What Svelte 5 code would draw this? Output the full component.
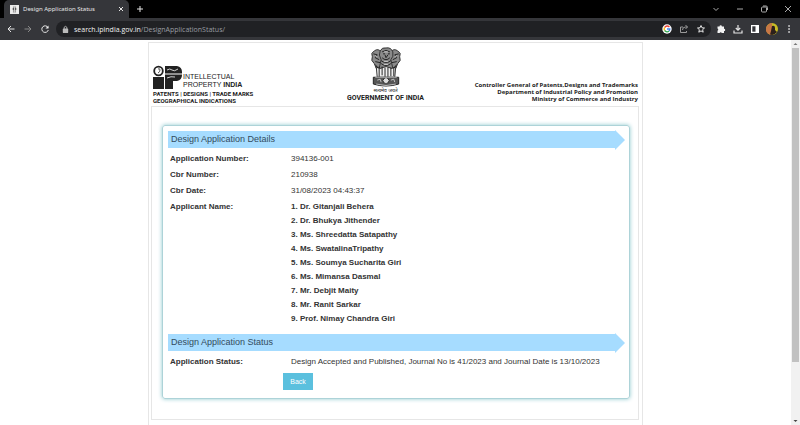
<script>
  const details = [
    ['Application Number:', '394136-001'],
    ['Cbr Number:', '210938'],
    ['Cbr Date:', '31/08/2023 04:43:37']
  ];
  const applicants = [
    'Dr. Gitanjali Behera',
    'Dr. Bhukya Jithender',
    'Ms. Shreedatta Satapathy',
    'Ms. SwatalinaTripathy',
    'Ms. Soumya Sucharita Giri',
    'Ms. Mimansa Dasmal',
    'Mr. Debjit Maity',
    'Mr. Ranit Sarkar',
    'Prof. Nimay Chandra Giri'
  ];
</script>

{#snippet emblem()}
  <svg viewBox="0 0 32 41" aria-hidden="true">
    <g fill="#8a8a8a" stroke="#333" stroke-width="1">
      <path d="M11 5q-3-4-7-1Q0 6 2 10q-2 4 2 7l2 5 7 1z" />
      <path d="M21 5q3-4 7-1 4 2 2 6 2 4-2 7l-2 5-7 1z" />
      <path d="M10 4q2-4 6-3 5-1 7 4 1 5-2 8l2 9H9l2-9Q8 8 10 4z" />
      <path d="M6 20l1 11h18l1-11-4 2-6-2-6 2z" fill="#eee" />
    </g>
    <path d="M12 5q4-3 8 0M13 7h2m3 0h2M15 8l1 3 2-3M12 11q4 4 8 0M11 14q5 4 10 0M11 17q5 4 10 0M3 7l4 1-2 3 4 2M29 7l-4 1 2 3-4 2M5 15l5 1M27 15l-5 1M9 20v11m3-11v9m3-8v10m3-10v10m3-10v9m3-9v9M5 18l3 4m19-4-3 4" fill="none" stroke="#222" stroke-width="1" />
    <path d="M5 9l2 1m18 0 2-1M14 5h4M14 15h4M14 18h4" stroke="#ddd" stroke-width=".8" />
    <path d="M3 31h26v7q-13 4-26 0z" fill="#555" stroke="#222" />
    <circle cx="16" cy="34.500" r="3" fill="#ddd" stroke="#222" />
    <path d="M13 34.500h6m-3-3v6M7 34l3-1 1 3m10-2 3-1 1 3M5 31h22M6 38q10 3 20 0" fill="none" stroke="#ddd" stroke-width=".8" />
  </svg>
{/snippet}

<div class="browser">
  <div class="tabs">
    <div class="tab">
      <svg class="fav" viewBox="0 0 9 9" aria-hidden="true"><path fill="#eee" d="M0 0h9v9H0z" /><path fill="#555" d="M3 1h3v2h1v2H6v3H3V5H2V3h1z" /><path stroke="#ccc" d="M4.500 1v7" /></svg>
      <span>Design Application Status</span>
      <button aria-label="Close tab"><svg viewBox="0 0 10 10"><path d="M3 3l4 4m0-4L3 7" /></svg></button>
    </div>
    <button class="plus" aria-label="New tab"><svg viewBox="0 0 10 10"><path d="M5 2v6M2 5h6" /></svg></button>
    <div class="win">
      <button aria-label="Search tabs"><svg viewBox="0 0 10 10"><path d="M2.500 4L5 6.500 7.500 4" /></svg></button>
      <button aria-label="Minimize"><svg viewBox="0 0 10 10"><path d="M2 5h6" /></svg></button>
      <button aria-label="Restore"><svg viewBox="0 0 10 10"><path d="M2.500 4q0-1 1-1h3q1 0 1 1v3q0 1-1 1h-3q-1 0-1-1zM4 2h3q1.500 0 1.500 1.500V6" /></svg></button>
      <button aria-label="Close window"><svg viewBox="0 0 10 10"><path d="M2 2l6 6m0-6L2 8" /></svg></button>
    </div>
  </div>
  <div class="toolbar">
    <div class="nav">
      <button aria-label="Back a page"><svg viewBox="0 0 10 10"><path d="M8.500 5H2m3-3L2 5l3 3" /></svg></button>
      <button class="off" aria-label="Forward a page"><svg viewBox="0 0 10 10"><path d="M1.500 5H8M5 2l3 3-3 3" /></svg></button>
      <button aria-label="Reload"><svg viewBox="0 0 10 10"><path d="M8 3.500A3.300 3.300 0 1 0 8.300 6" /><path d="M8.500 1.500v3h-3z" fill="#eee" stroke="none" /></svg></button>
    </div>
    <div class="address">
      <svg class="lock" viewBox="0 0 10 10" aria-hidden="true"><path fill="#bbb" stroke="none" d="M3 4h4q1 0 1 1v3q0 1-1 1H3Q2 9 2 8V5q0-1 1-1z" /><path stroke="#bbb" d="M3.500 4.500v-2q1.500-2 3 0v2" /></svg>
      <span class="url"><b>search.ipindia.gov.in</b>/DesignApplicationStatus/</span>
      <button aria-label="Google"><svg viewBox="0 0 10 10"><circle cx="5" cy="5" r="4.700" fill="#fff" stroke="none" /><path stroke="#ea4335" stroke-width="1.400" d="M2.600 3.500Q5 .8 7.400 3" /><path stroke="#fbbc05" stroke-width="1.400" d="M2.600 3.500Q1.700 5 2.600 6.500" /><path stroke="#34a853" stroke-width="1.400" d="M2.600 6.500Q5 9 7 7" /><path stroke="#4285f4" stroke-width="1.400" d="M7 7q1-1 .8-2H5" /></svg></button>
      <button aria-label="Share"><svg viewBox="0 0 10 10" class="dim"><path d="M4 3H1.500v5.500h6V7M3.500 6q0-3 3-3h2M6.500 1l2 2-2 2" /></svg></button>
      <button aria-label="Bookmark"><svg viewBox="0 0 10 10"><path d="M5 1.500l1 2.300 2.500.2-1.900 1.700.6 2.500L5 6.900 2.800 8.200l.6-2.500L1.500 4 4 3.800z" /></svg></button>
    </div>
    <div class="tools">
      <button aria-label="Extensions"><svg viewBox="0 0 10 10"><path fill="#f2f2f2" stroke="none" d="M1.500 2.500H3.500a1.200 1.200 0 0 1 2.400 0H8v2.200a1.200 1.200 0 0 1 0 2.400V9H5.800a1.200 1.200 0 0 0-2.200 0H1.500V6.700a1.200 1.200 0 0 0 0-2.200z" /></svg></button>
      <button aria-label="Downloads"><svg viewBox="0 0 10 10"><path d="M5 1v5M2.800 4 5 6.200 7.200 4M1 6.500V9h8V6.500" stroke-width="1.200" /></svg></button>
      <button aria-label="Side panel"><svg viewBox="0 0 10 10"><path fill="#fff" stroke="none" d="M1 1h8v8H1z" /><path fill="#35363a" stroke="none" d="M2.300 2.300h3.200v5.400H2.300z" /></svg></button>
      <button class="face" aria-label="Profile"><svg viewBox="0 0 12 12"><circle cx="6" cy="6" r="6" fill="#c9bd25" stroke="none" /><path fill="#c77745" stroke="none" d="M1 2.700Q3 0 6 0v12Q-1 11 0 5z" /><path fill="#2c201b" stroke="none" d="M6 3q3-1 3 2v2l2 2q-3 4-7 2.500L5 8z" /></svg></button>
      <button aria-label="Menu"><svg viewBox="0 0 10 10"><path fill="#eee" stroke="none" d="M4.300 1.300h1.500v1.500H4.300zm0 3h1.500v1.500H4.300zm0 3h1.500v1.500H4.300z" /></svg></button>
    </div>
  </div>

  <div class="view">
    <div class="scroll">
      <div class="page">
        <header>
          <div class="ip">
            <div class="brand">
              <svg viewBox="0 0 30 24" aria-hidden="true">
                <path fill="#222" d="M0 12h11v12H0zM12 1h12q5 1 5 6v3q0 5-5 6h-4v8h-8z" />
                <circle cx="5.500" cy="6" r="4.300" fill="#fff" stroke="#222" stroke-width="1.800" />
                <path d="M5 4q2-1 2 1T5 8" fill="none" stroke="#555" />
                <path d="M12 9h17" fill="none" stroke="#fff" />
                <path d="M14 5q3-2 5 0t6-1M14 13q4-2 8-1" fill="none" stroke="#fff" stroke-width=".8" />
              </svg>
              <div class="name">INTELLECTUAL<br />PROPERTY <b>INDIA</b></div>
            </div>
            <div class="tag">PATENTS | DESIGNS | TRADE MARKS<br />GEOGRAPHICAL INDICATIONS</div>
          </div>
          <div class="gov">
            {@render emblem()}
            <div class="hindi">सत्यमेव जयते</div>
            <strong>GOVERNMENT OF INDIA</strong>
          </div>
          <div class="office">Controller General of Patents,Designs and Trademarks<br />Department of Industrial Policy and Promotion<br />Ministry of Commerce and Industry</div>
        </header>
        <main>
          <section class="panel">
            <h2>Design Application Details</h2>
            <table>
              <tbody>
                {#each details as [label, value]}
                  <tr><th scope="row">{label}</th><td>{value}</td></tr>
                {/each}
                <tr>
                  <th scope="row">Applicant Name:</th>
                  <td class="people">
                    {#each applicants as name, i}<div>{i + 1}. {name}</div>{/each}
                  </td>
                </tr>
              </tbody>
            </table>
            <h2>Design Application Status</h2>
            <table>
              <tbody>
                <tr><th scope="row">Application Status:</th><td>Design Accepted and Published, Journal No is 41/2023 and Journal Date is 13/10/2023</td></tr>
              </tbody>
            </table>
            <button class="back">Back</button>
          </section>
        </main>
      </div>
    </div>
    <div class="bar" aria-hidden="true">
      <svg viewBox="0 0 9 8"><path d="M2.500 5l2-2 2 2z" fill="#777" /></svg>
      <div class="track"><div class="thumb"></div></div>
      <svg viewBox="0 0 9 8"><path d="M2.500 3l2 2 2-2z" fill="#444" /></svg>
    </div>
  </div>
</div>

<style>
  :global(body) { margin: 0; }
  .browser { display: flex; flex-direction: column; height: 100vh; overflow: hidden; background: #fff; color: #333; font-family: "Liberation Sans", Arial, sans-serif; }
  button { padding: 0; border: 0; background: none; font: inherit; display: flex; align-items: center; justify-content: center; }
  svg { display: block; flex: none; }
  .tabs svg, .toolbar svg { width: 10px; height: 10px; fill: none; stroke: #e6e6e6; stroke-width: 1; }
  .tabs { display: flex; height: 18px; background: #000; font: 6px "Noto Sans", sans-serif; color: #e8e8e8; }
  .tab { display: flex; align-items: center; gap: 4px; box-sizing: border-box; width: 125px; margin-left: 4px; padding: 0 3px 0 6px; background: #35363a; border-radius: 5px 5px 0 0; white-space: nowrap; }
  .tab span { flex: 1; }
  .tabs .fav { width: 9px; height: 9px; }
  .plus { margin-left: 6px; }
  .win { display: flex; gap: 14px; margin-left: auto; padding-right: 7px; }
  .win svg { stroke: #aaa; }
  .toolbar { display: flex; align-items: center; height: 22px; background: #35363a; }
  .nav { display: flex; gap: 7px; width: 50px; padding-left: 6px; }
  .nav .off svg { stroke: #888; }
  .address { display: flex; align-items: center; flex: 1; gap: 7px; height: 16px; padding: 0 5px; border-radius: 8px; background: #202124; }
  .url { flex: 1; color: #999da2; font: 7px "Open Sans", sans-serif; }
  .toolbar .lock { width: 9px; height: 9px; margin-right: -3px; }
  .url b { font-weight: 400; color: #f1f1f1; }
  .toolbar .dim { stroke: #999; }
  .tools { display: flex; align-items: center; gap: 7px; padding: 0 6px 0 5px; }
  .face { margin: 0 -1px; }
  .toolbar .face svg { width: 12px; height: 12px; }

  .view { display: flex; flex: 1; min-height: 0; }
  .scroll { flex: 1; overflow: hidden; padding-top: 2px; }
  .page { box-sizing: border-box; width: 62%; min-width: 495px; height: 100%; margin: 0 auto; padding: 0 3px 0 2px; border: 1px solid #e6e6e6; border-bottom: 0; }
  header { display: grid; grid-template-columns: 40% auto 1fr; align-items: end; height: 63px; padding: 0 1px 0 2px; color: #222; }
  .ip, .gov, .office { white-space: nowrap; }
  .brand { display: flex; align-items: end; }
  .brand svg { width: 30px; height: 24px; }
  .name { font-size: 7px; line-height: 8px; }
  .tag { font: 700 6px/7px Roboto, sans-serif; padding: 1px 0 2px; }
  .gov { display: flex; flex-direction: column; align-items: center; padding-bottom: 4px; }
  .gov svg { width: 32px; height: 40px; }
  .hindi { font: 5px/7px "Noto Sans", sans-serif; }
  .gov strong { font: 700 7px/8px Roboto, sans-serif; }
  .office { font: 700 6px/7px "Open Sans", sans-serif; text-align: right; padding-bottom: 3px; }
  main { border: 1px solid #e6e6e6; padding: 18px 8px 20px 10px; }
  .panel { padding: 5px 4px 8px 5px; border: 1px solid #add3d8; border-radius: 3px; box-shadow: 0 0 4px #8fc9ce; }
  h2 { position: relative; height: 17px; margin: 0 10px 3px 0; padding-left: 3px; background: #a6dcff; color: #334b5c; font-size: 9px; line-height: 17px; font-weight: 400; }
  h2::after { content: ""; position: absolute; left: 100%; top: -1px; border-left: 10px solid #a6dcff; border-top: 10px solid transparent; border-bottom: 10px solid transparent; }
  table { width: 100%; border-collapse: collapse; font-size: 8px; line-height: 14px; }
  th { width: 121px; padding: 1px 0 1px 2px; text-align: left; vertical-align: top; }
  td { padding: 1px 0; }
  .people { font-weight: 700; }
  table + h2 { margin-top: 7px; }
  .back { width: 30px; height: 17px; margin: 3px 0 0 115px; background: #5bc0de; color: #fff; font-size: 7px; }
  .bar { display: flex; flex-direction: column; width: 9px; background: #f1f1f1; }
  .bar svg { width: 9px; height: 8px; }
  .track { flex: 1; }
  .thumb { height: 85%; margin: 0 1px; background: #c1c1c1; }
</style>
